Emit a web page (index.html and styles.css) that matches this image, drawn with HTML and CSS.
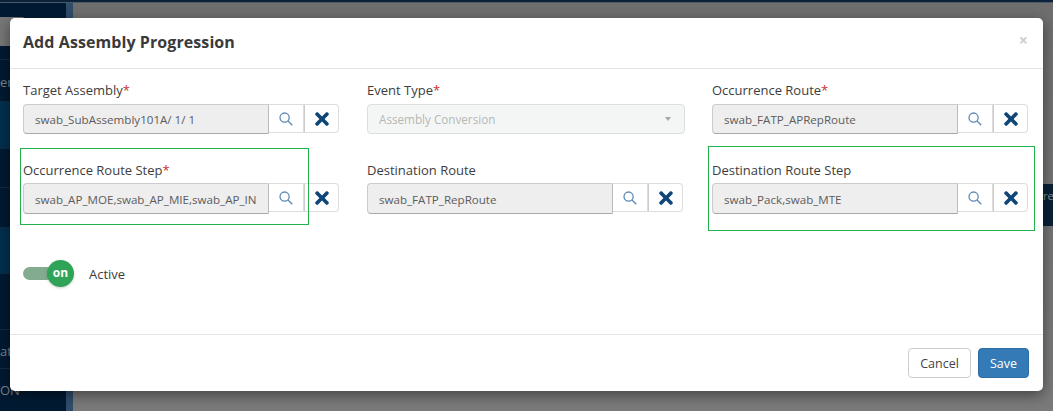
FILE: index.html
```html
<!DOCTYPE html>
<html lang="en">
<head>
<meta charset="UTF-8">
<title>Add Assembly Progression</title>
<link rel="stylesheet" href="styles.css">
</head>
<body>

<!-- page behind the dialog -->
<div class="page">
    <div class="topline"></div>
    <div class="page-row">
        <nav class="sidebar">
            <div class="side-btn"></div>
            <div class="side-item side-first">er</div>
            <div class="side-item side-lit h47"></div>
            <div class="side-item h39"></div>
            <div class="side-item h40"></div>
            <div class="side-item side-lit h46"></div>
            <div class="side-item h56"></div>
            <div class="side-item side-ati">ati</div>
            <div class="side-item side-on">ON</div>
        </nav>
        <div class="side-strip"></div>
        <main class="content">
            <div class="content-tab">re</div>
        </main>
    </div>
</div>

<div class="modal">
    <div class="modal-header">
        <h4>Add Assembly Progression</h4>
        <span class="close">×</span>
    </div>

    <div class="modal-body">
        <div class="form-grid">
            <div class="field">
                <label>Target Assembly<span class="req">*</span></label>
                <div class="lookup">
                    <div class="lookup-input">swab_SubAssembly101A/ 1/ 1</div>
                    <button class="lookup-btn"><svg class="ico-search" viewBox="0 0 14 14"><circle cx="5.6" cy="5.6" r="4.6"/><path d="M9 9l4.3 4.3"/></svg></button>
                    <button class="lookup-btn lookup-last"><svg class="ico-x" viewBox="0 0 352 512"><path d="M242.72 256l100.07-100.07c12.28-12.28 12.28-32.19 0-44.48l-22.24-22.24c-12.28-12.28-32.19-12.28-44.48 0L176 189.28 75.93 89.21c-12.28-12.28-32.19-12.28-44.48 0L9.21 111.45c-12.28 12.28-12.28 32.19 0 44.48L109.28 256 9.21 356.07c-12.28 12.28-12.28 32.19 0 44.48l22.24 22.24c12.28 12.28 32.2 12.28 44.48 0L176 322.72l100.07 100.07c12.28 12.28 32.2 12.28 44.48 0l22.24-22.24c12.28-12.28 12.28-32.19 0-44.48L242.72 256z"/></svg></button>
                </div>
            </div>

            <div class="field">
                <label>Event Type<span class="req">*</span></label>
                <div class="select-box">
                    <span>Assembly Conversion</span>
                    <span class="caret"></span>
                </div>
            </div>

            <div class="field">
                <label>Occurrence Route<span class="req">*</span></label>
                <div class="lookup">
                    <div class="lookup-input">swab_FATP_APRepRoute</div>
                    <button class="lookup-btn"><svg class="ico-search" viewBox="0 0 14 14"><circle cx="5.6" cy="5.6" r="4.6"/><path d="M9 9l4.3 4.3"/></svg></button>
                    <button class="lookup-btn lookup-last"><svg class="ico-x" viewBox="0 0 352 512"><path d="M242.72 256l100.07-100.07c12.28-12.28 12.28-32.19 0-44.48l-22.24-22.24c-12.28-12.28-32.19-12.28-44.48 0L176 189.28 75.93 89.21c-12.28-12.28-32.19-12.28-44.48 0L9.21 111.45c-12.28 12.28-12.28 32.19 0 44.48L109.28 256 9.21 356.07c-12.28 12.28-12.28 32.19 0 44.48l22.24 22.24c12.28 12.28 32.2 12.28 44.48 0L176 322.72l100.07 100.07c12.28 12.28 32.2 12.28 44.48 0l22.24-22.24c12.28-12.28 12.28-32.19 0-44.48L242.72 256z"/></svg></button>
                </div>
            </div>

            <div class="field field-low">
                <label>Occurrence Route Step<span class="req">*</span></label>
                <div class="lookup">
                    <div class="lookup-input">swab_AP_MOE,swab_AP_MIE,swab_AP_IN</div>
                    <button class="lookup-btn"><svg class="ico-search" viewBox="0 0 14 14"><circle cx="5.6" cy="5.6" r="4.6"/><path d="M9 9l4.3 4.3"/></svg></button>
                    <button class="lookup-btn lookup-last"><svg class="ico-x" viewBox="0 0 352 512"><path d="M242.72 256l100.07-100.07c12.28-12.28 12.28-32.19 0-44.48l-22.24-22.24c-12.28-12.28-32.19-12.28-44.48 0L176 189.28 75.93 89.21c-12.28-12.28-32.19-12.28-44.48 0L9.21 111.45c-12.28 12.28-12.28 32.19 0 44.48L109.28 256 9.21 356.07c-12.28 12.28-12.28 32.19 0 44.48l22.24 22.24c12.28 12.28 32.2 12.28 44.48 0L176 322.72l100.07 100.07c12.28 12.28 32.2 12.28 44.48 0l22.24-22.24c12.28-12.28 12.28-32.19 0-44.48L242.72 256z"/></svg></button>
                </div>
            </div>

            <div class="field field-low">
                <label>Destination Route</label>
                <div class="lookup">
                    <div class="lookup-input">swab_FATP_RepRoute</div>
                    <button class="lookup-btn"><svg class="ico-search" viewBox="0 0 14 14"><circle cx="5.6" cy="5.6" r="4.6"/><path d="M9 9l4.3 4.3"/></svg></button>
                    <button class="lookup-btn lookup-last"><svg class="ico-x" viewBox="0 0 352 512"><path d="M242.72 256l100.07-100.07c12.28-12.28 12.28-32.19 0-44.48l-22.24-22.24c-12.28-12.28-32.19-12.28-44.48 0L176 189.28 75.93 89.21c-12.28-12.28-32.19-12.28-44.48 0L9.21 111.45c-12.28 12.28-12.28 32.19 0 44.48L109.28 256 9.21 356.07c-12.28 12.28-12.28 32.19 0 44.48l22.24 22.24c12.28 12.28 32.2 12.28 44.48 0L176 322.72l100.07 100.07c12.28 12.28 32.2 12.28 44.48 0l22.24-22.24c12.28-12.28 12.28-32.19 0-44.48L242.72 256z"/></svg></button>
                </div>
            </div>

            <div class="field field-low">
                <label>Destination Route Step</label>
                <div class="lookup">
                    <div class="lookup-input">swab_Pack,swab_MTE</div>
                    <button class="lookup-btn"><svg class="ico-search" viewBox="0 0 14 14"><circle cx="5.6" cy="5.6" r="4.6"/><path d="M9 9l4.3 4.3"/></svg></button>
                    <button class="lookup-btn lookup-last"><svg class="ico-x" viewBox="0 0 352 512"><path d="M242.72 256l100.07-100.07c12.28-12.28 12.28-32.19 0-44.48l-22.24-22.24c-12.28-12.28-32.19-12.28-44.48 0L176 189.28 75.93 89.21c-12.28-12.28-32.19-12.28-44.48 0L9.21 111.45c-12.28 12.28-12.28 32.19 0 44.48L109.28 256 9.21 356.07c-12.28 12.28-12.28 32.19 0 44.48l22.24 22.24c12.28 12.28 32.2 12.28 44.48 0L176 322.72l100.07 100.07c12.28 12.28 32.2 12.28 44.48 0l22.24-22.24c12.28-12.28 12.28-32.19 0-44.48L242.72 256z"/></svg></button>
                </div>
            </div>
        </div>

        <div class="toggle-row">
            <div class="toggle">
                <div class="toggle-track"></div>
                <div class="toggle-knob">on</div>
            </div>
            <span class="toggle-label">Active</span>
        </div>
    </div>

    <div class="modal-footer">
        <button class="btn btn-cancel">Cancel</button>
        <button class="btn btn-save">Save</button>
    </div>

    <!-- green review marks drawn over the form -->
    <div class="mark mark-left"></div>
    <div class="mark mark-right"></div>
</div>

</body>
</html>
```

FILE: styles.css
```css
* {
    box-sizing: border-box;
}

html, body {
    margin: 0;
    padding: 0;
    height: 411px;
    overflow: hidden;
}

body {
    position: relative;
    width: 1053px;
    font-family: "Open Sans", Arial, sans-serif;
    font-size: 13px;
    color: #333;
    background-color: #737373;
}

/* page behind */
.page {
    display: flex;
    flex-direction: column;
    height: 411px;
}

.topline {
    height: 3px;
    background-color: #0b2239;
    border-bottom: 1px solid #4a5a68;
}

.page-row {
    display: flex;
    flex: 1;
}

.sidebar {
    width: 66px;
    padding-top: 14px;
    background-color: #011a33;
    color: #7d858c;
    font-size: 13px;
}

.side-btn {
    width: 25px;
    height: 29px;
    background-color: #777;
    border-radius: 0 3px 3px 0;
}

.side-item {
    border-top: 1px solid #0f2c45;
    line-height: 16px;
}

.side-lit {
    background-color: #03304f;
}

.h47 { height: 47px; }
.h39 { height: 39px; }
.h40 { height: 40px; }
.h46 { height: 46px; }
.h56 { height: 56px; }

.side-first {
    margin-top: 13px;
    height: 42px;
    padding-top: 14px;
}

.side-ati {
    height: 39px;
    padding-top: 13px;
}

.side-on {
    height: 43px;
    padding-top: 13px;
}

.side-strip {
    width: 7px;
    background-color: #2f4d6b;
}

.content {
    flex: 1;
    display: flex;
    flex-direction: column;
    align-items: flex-end;
    padding-top: 181px;
    background: linear-gradient(#6e6e6e, #7a7a7a);
}

.content-tab {
    width: 10px;
    height: 42px;
    padding-top: 4px;
    background-color: #0a2138;
    color: #8a8f94;
    font-size: 11px;
}

/* dialog */
.modal {
    position: absolute;
    left: 10px;
    top: 18px;
    width: 1033px;
    height: 373px;
    display: flex;
    flex-direction: column;
    background-color: #fff;
    border-radius: 5px;
    box-shadow: 0 4px 14px rgba(0, 0, 0, 0.45);
}

.modal-header {
    display: flex;
    justify-content: space-between;
    align-items: center;
    height: 51px;
    padding: 0 13px 2px;
    border-bottom: 1px solid #e5e5e5;
}

.modal-header h4 {
    margin: 0;
    font-size: 16px;
    font-weight: 700;
    letter-spacing: 0.08px;
    color: #3a3a3a;
}

.close {
    font-size: 16px;
    font-weight: 700;
    color: #cfcfcf;
    margin-right: 2px;
    margin-top: -4px;
}

.modal-body {
    flex: 1;
    padding: 11px 13px 0;
}

.form-grid {
    display: grid;
    grid-template-columns: 316px 317px 316px;
    column-gap: 28px;
    row-gap: 26px;
}

.field label {
    display: block;
    height: 24px;
    line-height: 20px;
    font-size: 13px;
    color: #3d3d3d;
}

.field-low label {
    height: 23px;
}

.req {
    color: #c9302c;
}

.lookup {
    display: flex;
    height: 30px;
}

.field-low .lookup {
    height: 31px;
}

.lookup-input {
    width: 246px;
    height: 100%;
    padding: 0 11px;
    line-height: 29px;
    font-size: 11.6px;
    color: #5c5c5c;
    white-space: nowrap;
    overflow: hidden;
    background-color: #eee;
    border: 1px solid #ccc;
    border-right: 1px solid #bbb;
    border-bottom: 1px solid #aaa;
    border-radius: 4px 0 0 4px;
}

.field-low .lookup-input {
    line-height: 31px;
}

.lookup-btn {
    display: flex;
    align-items: center;
    justify-content: center;
    width: 35px;
    height: 29px;
    padding: 0;
    background-color: #fff;
    border: 1px solid #ddd;
    border-left: 0;
}

.lookup-last {
    border-left: 1px solid #ccc;
    border-radius: 0 4px 4px 0;
}

.ico-search {
    width: 14px;
    height: 14px;
    fill: none;
    stroke: #5f8ab6;
    stroke-width: 1.3;
}

.ico-x {
    width: 14px;
    height: 20px;
    fill: #0f4577;
}

.select-box {
    display: flex;
    justify-content: space-between;
    align-items: center;
    width: 318px;
    height: 30px;
    padding: 0 12px 0 11px;
    font-size: 11.7px;
    color: #b4b8b6;
    background-color: #f4f6f5;
    border: 1px solid #dcdfde;
    border-radius: 4px;
}

.caret {
    width: 0;
    height: 0;
    border-left: 3.5px solid transparent;
    border-right: 3.5px solid transparent;
    border-top: 4px solid #a8a8a8;
    margin-right: 1px;
}

.toggle-row {
    display: flex;
    align-items: center;
    margin-top: 46px;
}

.toggle {
    display: flex;
    align-items: center;
    width: 51px;
    height: 27px;
}

.toggle-track {
    width: 30px;
    height: 13px;
    margin-right: -6px;
    background-color: #83ab90;
    border-radius: 7px;
}

.toggle-knob {
    flex: none;
    width: 27px;
    height: 27px;
    line-height: 25px;
    text-align: center;
    font-size: 12px;
    font-weight: 700;
    color: #fff;
    background-color: #2fa458;
    border-radius: 50%;
    box-shadow: 0 1px 3px rgba(0, 0, 0, 0.2);
}

.toggle-label {
    margin-left: 15px;
    font-size: 13px;
    color: #3d3d3d;
}

.modal-footer {
    display: flex;
    justify-content: flex-end;
    gap: 7px;
    height: 57px;
    padding: 13px 14px 0 0;
    border-top: 1px solid #e5e5e5;
}

.btn {
    height: 30px;
    font-family: "Open Sans", Arial, sans-serif;
    font-size: 12.5px;
    border-radius: 4px;
}

.btn-cancel {
    width: 63px;
    color: #444;
    background-color: #fff;
    border: 1px solid #ccc;
}

.btn-save {
    width: 51px;
    color: #fff;
    background-color: #337ab7;
    border: 1px solid #2e6da4;
}

/* review marks */
.mark {
    position: absolute;
    border: 1px solid #22b14c;
}

.mark-left {
    left: 10px;
    top: 130px;
    width: 289px;
    height: 77px;
}

.mark-right {
    left: 698px;
    top: 128px;
    width: 327px;
    height: 85px;
}
```
